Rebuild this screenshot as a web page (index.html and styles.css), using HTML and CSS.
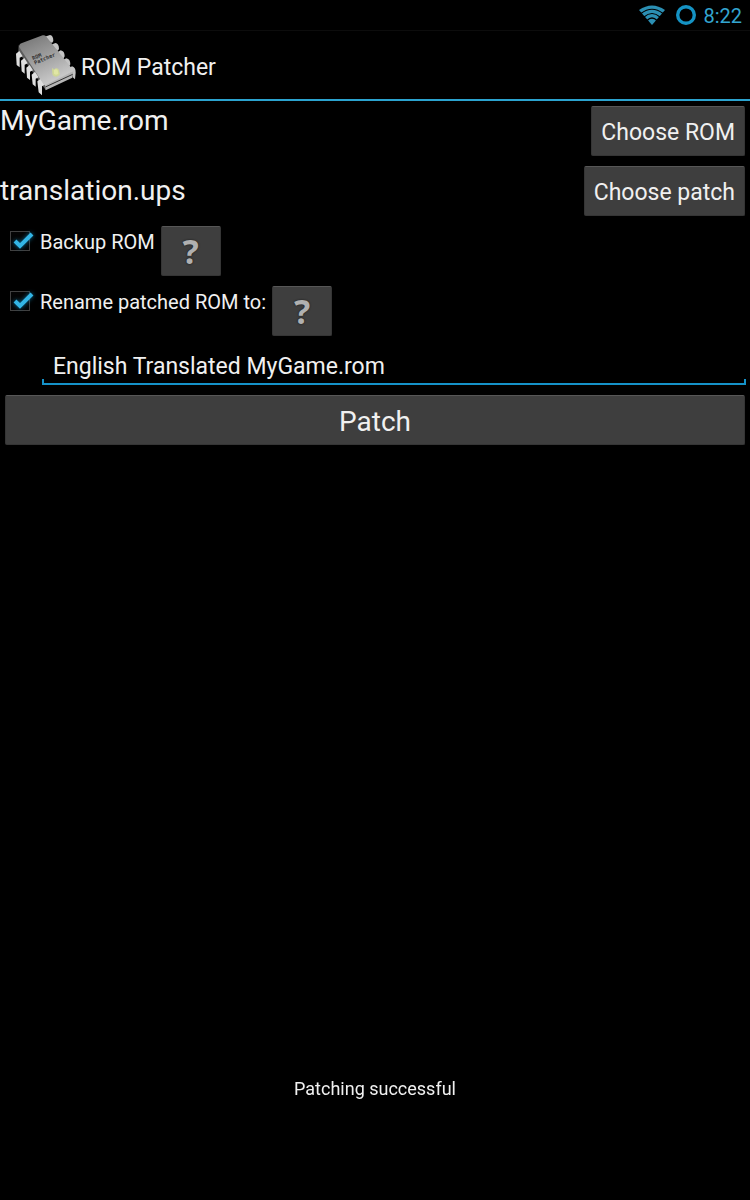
FILE: index.html
```html
<!DOCTYPE html>
<html lang="en">
<head>
    <meta charset="UTF-8">
    <meta name="viewport" content="width=device-width, initial-scale=1.0">
    <title>ROM Patcher</title>
    <link rel="stylesheet" href="styles.css">
</head>
<body>
    <div class="status-bar">
        <svg class="wifi" viewBox="0 0 26 20" aria-hidden="true">
            <path fill="#2b8fb3" d="M0 5 Q13 -4 26 5 L13 20 Z"/>
            <path fill="none" stroke="#000" stroke-width="1.2" d="M2 8.5 Q13 0 24 8.5 M5 12 Q13 5 21 12 M8 15.5 Q13 10.500 18 15.500"/>
        </svg>
        <svg class="battery" viewBox="0 0 20 20" aria-hidden="true">
            <circle cx="10" cy="10" r="8.300" fill="none" stroke="#1593c4" stroke-width="3.400"/>
        </svg>
        <span class="clock">8:22</span>
    </div>

    <header class="action-bar">
        <svg class="app-icon" viewBox="0 0 210 204" aria-hidden="true">
            <defs>
                <linearGradient id="face" x1="0.2" y1="0" x2="0.700" y2="1">
                    <stop offset="0" stop-color="#777"/>
                    <stop offset="0.500" stop-color="#a2a2a2"/>
                    <stop offset="1" stop-color="#d2d2d2"/>
                </linearGradient>
            </defs>
            <!-- far pins -->
            <g fill="#c4c4c4">
                <path d="M102 18 L120 12 Q130 14 130 30 L126 36 L120 32 L114 40 Z"/>
                <path d="M122 42 L136 36 Q147 38 147 54 L143 60 L137 55 L132 62 Z"/>
                <path d="M139 65 L152 58 Q164 60 164 76 L160 83 L154 78 L149 86 Z"/>
                <path d="M157 88 L169 82 Q181 84 181 100 L177 107 L171 101 L166 110 Z"/>
                <path d="M174 113 L186 106 Q197 108 197 125 L195 145 L188 139 L187 126 Z"/>
            </g>
            <path fill="#5c5c5c" d="M26 42 L103 160 L108 178 L94 160 L25 62 Z"/>
            <!-- near pins -->
            <g fill="#dedede">
                <path d="M28 60 L18 68 L20 102 L29 109 L29 80 L38 76 Z"/>
                <path d="M43 81 L33 89 L35 121 L44 128 L44 101 L53 97 Z"/>
                <path d="M59 102 L49 110 L51 140 L60 147 L60 122 L69 118 Z"/>
                <path d="M75 122 L65 131 L68 160 L77 167 L77 143 L86 139 Z"/>
                <path d="M92 143 L82 151 L86 184 L96 193 L96 166 L104 161 Z"/>
            </g>
            <path fill="#b5b5b5" d="M103 160 L190 119 L187 140 L107 178 Z"/>
            <path fill="none" stroke="#333" stroke-width="3" d="M106 168 L188 130"/>
            <path fill="url(#face)" d="M28 42 Q30 38 36 36 L98 13 Q104 11 108 16 L189 117 Q191 120 187 122 L108 161 Q103 163 100 159 L27 47 Z"/>
            <path fill="#d0d896" d="M126 110 L132 116 Q138 109 145 114 L150 129 Q147 136 139 137 Q128 136 127 128 Z"/>
            <path fill="#e0e6a4" d="M132 118 Q138 112 143 118 L145 128 Q138 134 132 128 Z"/>
            <g class="chip-print" transform="rotate(-23 68 85)">
                <text x="68" y="88">ROM</text>
                <text x="68" y="103">Patcher</text>
            </g>
        </svg>
        <h1>ROM Patcher</h1>
    </header>

    <main>
        <div class="file-row">
            <span class="file-name">MyGame.rom</span>
            <button type="button" class="btn">Choose ROM</button>
        </div>
        <div class="file-row centered">
            <span class="file-name">translation.ups</span>
            <button type="button" class="btn">Choose patch</button>
        </div>
        <div class="option-row">
            <label class="option" for="backup">
                <span class="check">
                    <input type="checkbox" id="backup" checked>
                    <svg class="tick" viewBox="0 0 24 24" aria-hidden="true"><path d="M5 11 L10 16 L22 4"/></svg>
                </span>
                Backup ROM
            </label>
            <button type="button" class="btn help" aria-label="About backup">?</button>
        </div>
        <div class="option-row">
            <label class="option" for="rename">
                <span class="check">
                    <input type="checkbox" id="rename" checked>
                    <svg class="tick" viewBox="0 0 24 24" aria-hidden="true"><path d="M5 11 L10 16 L22 4"/></svg>
                </span>
                Rename patched ROM to:
            </label>
            <button type="button" class="btn help" aria-label="About renaming">?</button>
        </div>
        <div class="name-field">
            <input type="text" id="new-name" aria-label="New ROM name" value="English Translated MyGame.rom">
        </div>
        <button type="button" class="btn patch">Patch</button>
    </main>

    <div class="toast" role="status">Patching successful</div>
</body>
</html>
```
FILE: styles.css
```css
* {
    box-sizing: border-box;
}
body {
    margin: 0;
    min-height: 100vh;
    background-color: #000;
    color: #f0f0f0;
    font-family: Roboto, "Liberation Sans", sans-serif;
}
.status-bar {
    display: flex;
    align-items: center;
    justify-content: flex-end;
    height: 31px;
    padding-right: 8px;
    border-bottom: 1px solid #0c0c0c;
    color: #33a5d0;
    font-size: 20px;
}
.clock {
    padding-top: 1px;
}
.wifi {
    width: 26px;
    height: 20px;
    margin-right: 11px;
}
.battery {
    width: 20px;
    height: 20px;
    margin-right: 7px;
}
.action-bar {
    display: flex;
    align-items: center;
    padding-left: 10px;
    border-bottom: 2px solid #2ba3cf;
}
.app-icon {
    width: 70px;
    height: 68px;
}
.chip-print {
    fill: #333;
    font-family: "DejaVu Sans Mono", monospace;
    font-size: 16px;
    font-weight: bold;
}
h1 {
    margin: 0;
    padding: 4px 0 0 1px;
    font-size: 23px;
    font-weight: 400;
}
main {
    display: flex;
    flex-direction: column;
}
.file-row {
    display: flex;
    align-items: flex-start;
    justify-content: space-between;
}
.file-row.centered {
    align-items: center;
}
.file-name {
    font-size: 28px;
    line-height: 40px;
}
.btn {
    height: 50px;
    margin: 5px;
    padding: 2px 9px 0;
    border: 1px solid #353535;
    border-top-color: #575757;
    border-radius: 2px;
    background-color: #3e3e3e;
    color: #f0f0f0;
    font-family: inherit;
    font-size: 23px;
}
.option-row {
    display: flex;
    align-items: flex-start;
    padding-left: 10px;
}
.option {
    display: flex;
    align-items: center;
    gap: 6px;
    height: 42px;
    padding-right: 1px;
    font-size: 20px;
}
.check {
    display: grid;
    width: 24px;
    height: 24px;
}
.check input {
    grid-area: 1 / 1;
    appearance: none;
    width: 20px;
    height: 20px;
    margin: 1px 0 0;
    border: 1px solid #404040;
    background-color: #050505;
}
.tick {
    grid-area: 1 / 1;
    width: 24px;
    height: 24px;
    overflow: visible;
    pointer-events: none;
    visibility: hidden;
    filter: drop-shadow(0 0 2px #0a6f99);
}
.tick path {
    fill: none;
    stroke: #33b5e5;
    stroke-width: 4;
}
.check input:checked + .tick {
    visibility: visible;
}
.help {
    width: 60px;
    padding-top: 0;
    color: #b0b0b0;
    font-family: "Noto Sans", sans-serif;
    font-size: 34px;
    font-weight: 700;
    line-height: 40px;
    text-shadow: 0 0 2px #111;
}
.name-field {
    margin: 6px 4px 5px 42px;
    border-bottom: 2px solid #1592c8;
    position: relative;
}
.name-field::before,
.name-field::after {
    content: "";
    position: absolute;
    bottom: 0;
    width: 2px;
    height: 4px;
    background-color: #1592c8;
}
.name-field::before {
    left: 0;
}
.name-field::after {
    right: 0;
}
.name-field input {
    display: block;
    width: 100%;
    height: 36px;
    padding: 2px 11px 0;
    border: 0;
    outline: 0;
    background: transparent;
    color: #f0f0f0;
    font-family: inherit;
    font-size: 23px;
}
.patch {
    font-size: 28px;
}
.toast {
    position: fixed;
    right: 0;
    bottom: 100px;
    left: 0;
    font-size: 18px;
    line-height: 22px;
    text-align: center;
}
```
